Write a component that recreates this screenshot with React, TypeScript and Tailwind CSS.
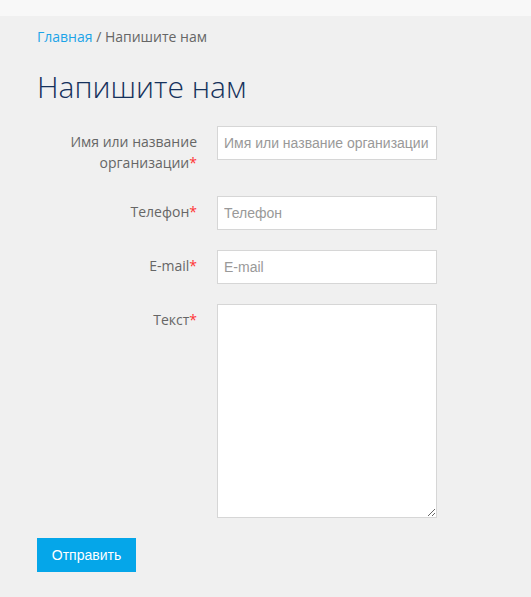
import React from "react";

const Req = () => <span className="text-[#ff3333]">*</span>;

const Field = ({ label, children }: { label: React.ReactNode; children: React.ReactNode }) => (
  <div className="flex items-start mb-5">
    <label className="w-[160px] shrink-0 text-right pt-[5px] pb-[3px] text-[14px] leading-[21px] text-[#666]">
      {label}
    </label>
    <div className="ml-5">{children}</div>
  </div>
);

const inputCls =
  "w-[220px] h-[34px] bg-white border border-[#d6d6d6] px-[6px] text-[14px] text-[#555] placeholder:text-[#999] outline-none font-['Liberation_Sans',Arial,sans-serif]";

export default function App() {
  return (
    <div className="min-h-screen bg-[#f0f0f0] font-['Open_Sans',sans-serif]">
      <div className="h-4 bg-[#f8f8f8]" />
      <main className="px-[37px] pt-[11px]">
        <div className="text-[14px] leading-[20px] text-[#666]">
          <a className="text-[#1ca4e8]">Главная</a> / Напишите нам
        </div>
        <h1 className="mt-[20px] mb-[19px] text-[30px] leading-[40px] font-light text-[#16325c]">
          Напишите нам
        </h1>
        <form>
          <Field
            label={
              <>
                Имя или название
                <br />
                организации
                <Req />
              </>
            }
          >
            <input className={inputCls} placeholder="Имя или название организации" />
          </Field>
          <Field label={<>Телефон<Req /></>}>
            <input className={inputCls} placeholder="Телефон" />
          </Field>
          <Field label={<>E-mail<Req /></>}>
            <input className={inputCls} placeholder="E-mail" />
          </Field>
          <Field label={<>Текст<Req /></>}>
            <textarea className="block w-[220px] h-[214px] bg-white border border-[#d6d6d6] p-[6px] text-[14px] outline-none" />
          </Field>
          <button
            type="button"
            className="w-[99px] h-[34px] bg-[#05a6e9] text-white text-[14px] font-['Liberation_Sans',Arial,sans-serif]"
          >
            Отправить
          </button>
        </form>
      </main>
    </div>
  );
}
